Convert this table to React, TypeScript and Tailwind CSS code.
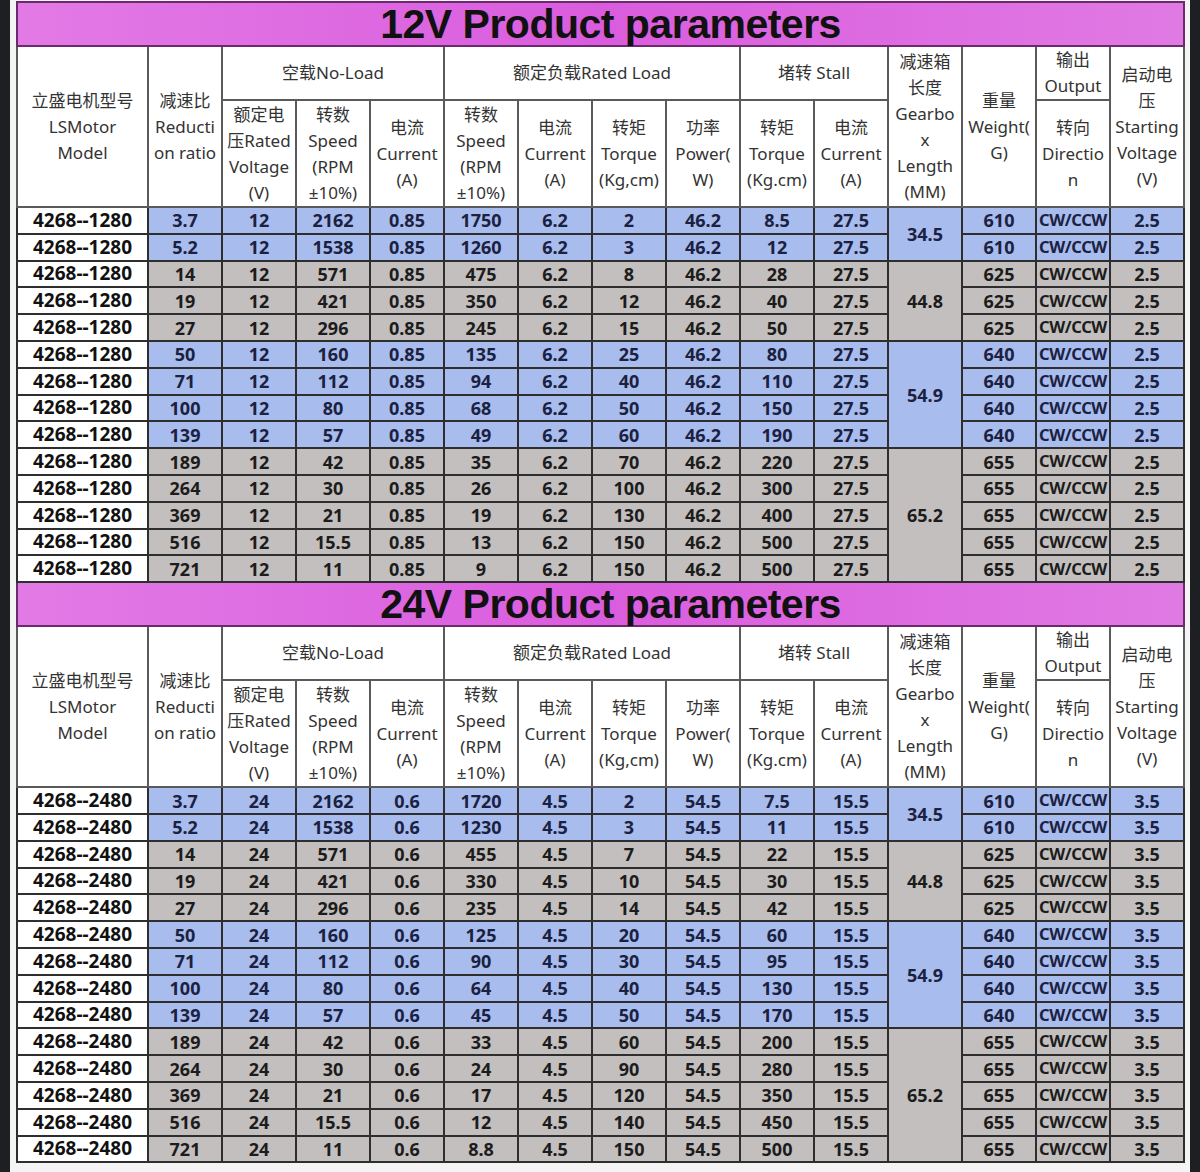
import React from 'react';

type Row = (string | number)[];

const rows12: Row[] = [
  [3.7, 12, 2162, 0.85, 1750, 6.2, 2, 46.2, 8.5, 27.5, 610],
  [5.2, 12, 1538, 0.85, 1260, 6.2, 3, 46.2, 12, 27.5, 610],
  [14, 12, 571, 0.85, 475, 6.2, 8, 46.2, 28, 27.5, 625],
  [19, 12, 421, 0.85, 350, 6.2, 12, 46.2, 40, 27.5, 625],
  [27, 12, 296, 0.85, 245, 6.2, 15, 46.2, 50, 27.5, 625],
  [50, 12, 160, 0.85, 135, 6.2, 25, 46.2, 80, 27.5, 640],
  [71, 12, 112, 0.85, 94, 6.2, 40, 46.2, 110, 27.5, 640],
  [100, 12, 80, 0.85, 68, 6.2, 50, 46.2, 150, 27.5, 640],
  [139, 12, 57, 0.85, 49, 6.2, 60, 46.2, 190, 27.5, 640],
  [189, 12, 42, 0.85, 35, 6.2, 70, 46.2, 220, 27.5, 655],
  [264, 12, 30, 0.85, 26, 6.2, 100, 46.2, 300, 27.5, 655],
  [369, 12, 21, 0.85, 19, 6.2, 130, 46.2, 400, 27.5, 655],
  [516, 12, 15.5, 0.85, 13, 6.2, 150, 46.2, 500, 27.5, 655],
  [721, 12, 11, 0.85, 9, 6.2, 150, 46.2, 500, 27.5, 655],
];

const rows24: Row[] = [
  [3.7, 24, 2162, 0.6, 1720, 4.5, 2, 54.5, 7.5, 15.5, 610],
  [5.2, 24, 1538, 0.6, 1230, 4.5, 3, 54.5, 11, 15.5, 610],
  [14, 24, 571, 0.6, 455, 4.5, 7, 54.5, 22, 15.5, 625],
  [19, 24, 421, 0.6, 330, 4.5, 10, 54.5, 30, 15.5, 625],
  [27, 24, 296, 0.6, 235, 4.5, 14, 54.5, 42, 15.5, 625],
  [50, 24, 160, 0.6, 125, 4.5, 20, 54.5, 60, 15.5, 640],
  [71, 24, 112, 0.6, 90, 4.5, 30, 54.5, 95, 15.5, 640],
  [100, 24, 80, 0.6, 64, 4.5, 40, 54.5, 130, 15.5, 640],
  [139, 24, 57, 0.6, 45, 4.5, 50, 54.5, 170, 15.5, 640],
  [189, 24, 42, 0.6, 33, 4.5, 60, 54.5, 200, 15.5, 655],
  [264, 24, 30, 0.6, 24, 4.5, 90, 54.5, 280, 15.5, 655],
  [369, 24, 21, 0.6, 17, 4.5, 120, 54.5, 350, 15.5, 655],
  [516, 24, 15.5, 0.6, 12, 4.5, 140, 54.5, 450, 15.5, 655],
  [721, 24, 11, 0.6, 8.8, 4.5, 150, 54.5, 500, 15.5, 655],
];

// gearbox length is merged over groups of rows
const gearbox: Record<number, { span: number; value: string }> = {
  0: { span: 2, value: '34.5' },
  2: { span: 3, value: '44.8' },
  5: { span: 4, value: '54.9' },
  9: { span: 5, value: '65.2' },
};

const blueRows = [0, 1, 5, 6, 7, 8];

const th = 'border-2 border-[#5a5a5a] bg-white text-center align-middle font-normal text-[17px] leading-[26px] text-[#333] p-0 overflow-hidden whitespace-nowrap';
const td = 'border-2 border-[#2e2e2e] text-center align-middle font-bold text-[18px] leading-none p-0 whitespace-nowrap overflow-hidden';

function Block({ volt, model, start, rows }: { volt: string; model: string; start: string; rows: Row[] }) {
  return (
    <>
      <tr className="h-[44px]">
        <td
          colSpan={15}
          className="border-2 border-[#6b2a6e] bg-gradient-to-r from-[#e27ae5] via-[#da5cde] to-[#e07ae3] p-0 pl-[20px] text-center align-middle"
        >
          <span className="text-[41px] font-bold leading-none tracking-[-0.5px] text-[#111] [font-family:'Liberation_Sans',Arial,sans-serif]">
            {volt} Product parameters
          </span>
        </td>
      </tr>
      <tr className="h-[53px]">
        <th rowSpan={2} className={th}>立盛电机型号<br />LSMotor<br />Model</th>
        <th rowSpan={2} className={th}>减速比<br />Reducti<br />on ratio</th>
        <th colSpan={3} className={th}>空载No-Load</th>
        <th colSpan={4} className={th}>额定负载Rated Load</th>
        <th colSpan={2} className={th}>堵转 Stall</th>
        <th rowSpan={2} className={th}>减速箱<br />长度<br />Gearbo<br />x<br />Length<br />(MM)</th>
        <th rowSpan={2} className={th}>重量<br />Weight(<br />G)</th>
        <th className={th}>输出<br />Output</th>
        <th rowSpan={2} className={th}>启动电<br />压<br />Starting<br />Voltage<br />(V)</th>
      </tr>
      <tr className="h-[107px]">
        <th className={th}>额定电<br />压Rated<br />Voltage<br />(V)</th>
        <th className={th}>转数<br />Speed<br />(RPM<br />±10%)</th>
        <th className={th}>电流<br />Current<br />(A)</th>
        <th className={th}>转数<br />Speed<br />(RPM<br />±10%)</th>
        <th className={th}>电流<br />Current<br />(A)</th>
        <th className={th}>转矩<br />Torque<br />(Kg,cm)</th>
        <th className={th}>功率<br />Power(<br />W)</th>
        <th className={th}>转矩<br />Torque<br />(Kg.cm)</th>
        <th className={th}>电流<br />Current<br />(A)</th>
        <th className={th}>转向<br />Directio<br />n</th>
      </tr>
      {rows.map((r, i) => {
        const blue = blueRows.includes(i);
        const cell = blue ? 'bg-[#a8bcee] text-[#1b2140]' : 'bg-[#c3bfbe] text-[#1c1c1c]';
        const g = gearbox[i];
        return (
          <tr key={i} className="h-[26.8px]">
            <td className={`${td} bg-white text-[#111] !text-[19px]`}>{model}</td>
            {r.slice(0, 10).map((v, j) => (
              <td key={j} className={`${td} ${cell}`}>{v}</td>
            ))}
            {g && (
              <td rowSpan={g.span} className={`${td} ${cell}`}>{g.value}</td>
            )}
            <td className={`${td} ${cell}`}>{r[10]}</td>
            <td className={`${td} ${cell} !text-[16.5px] tracking-[-0.4px]`}>CW/CCW</td>
            <td className={`${td} ${cell}`}>{start}</td>
          </tr>
        );
      })}
    </>
  );
}

export default function App() {
  return (
    <div className="min-h-[1172px] w-[1200px] bg-[#1e1f22] px-[10px]">
      <div className="bg-[#f4f4f4] px-[6px] pt-[1px] pb-[12px] [font-family:'Noto_Sans','Noto_Sans_CJK_SC',sans-serif]">
        <table className="w-[1167px] table-fixed border-collapse">
          <colgroup>
            <col className="w-[131px]" />
            {Array.from({ length: 14 }).map((_, i) => (
              <col key={i} className="w-[74px]" />
            ))}
          </colgroup>
          <tbody>
            <Block volt="12V" model="4268--1280" start="2.5" rows={rows12} />
            <Block volt="24V" model="4268--2480" start="3.5" rows={rows24} />
          </tbody>
        </table>
      </div>
    </div>
  );
}
